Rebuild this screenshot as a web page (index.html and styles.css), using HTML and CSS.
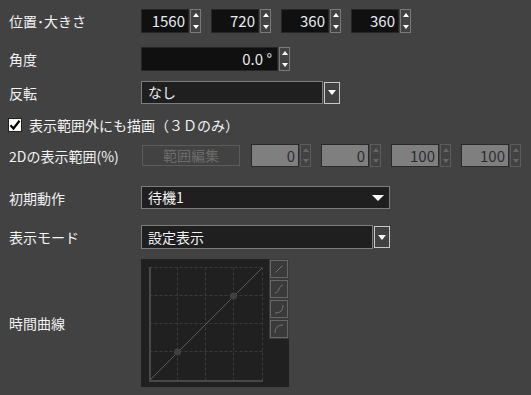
FILE: index.html
```html
<!doctype html>
<html>
<head>
<meta charset="utf-8" />
<title>プロパティ</title>
<link rel="stylesheet" href="styles.css">
</head>
<body>
<div class="props">
  <!-- 位置・大きさ -->
  <div class="row r-pos">
    <div class="label">位置･大きさ</div>
    <div class="num"><span class="box">1560</span><span class="spin"><i class="up"></i><i class="dn"></i></span></div>
    <div class="num"><span class="box">720</span><span class="spin"><i class="up"></i><i class="dn"></i></span></div>
    <div class="num"><span class="box">360</span><span class="spin"><i class="up"></i><i class="dn"></i></span></div>
    <div class="num"><span class="box">360</span><span class="spin"><i class="up"></i><i class="dn"></i></span></div>
  </div>

  <!-- 角度 -->
  <div class="row r-angle">
    <div class="label">角度</div>
    <div class="num wide"><span class="box">0.0 °</span><span class="spin"><i class="up"></i><i class="dn"></i></span></div>
  </div>

  <!-- 反転 -->
  <div class="row r-flip">
    <div class="label">反転</div>
    <div class="select s-flip">なし</div>
    <div class="drop"><i class="arrow"></i></div>
  </div>

  <!-- チェック -->
  <div class="row r-check">
    <span class="check">
      <svg width="12" height="12" viewBox="0 0 12 12"><path d="M1.5 6.2 L4.5 9.5 L10.5 1.8" fill="none" stroke="#000" stroke-width="2.2"/></svg>
    </span>
    <span class="check-text">表示範囲外にも描画（３Ｄのみ）</span>
  </div>

  <!-- 2Dの表示範囲 -->
  <div class="row r-range">
    <div class="label">2Dの表示範囲(%)</div>
    <div class="btn-off">範囲編集</div>
    <div class="num off"><span class="box">0</span><span class="spin"><i class="up"></i><i class="dn"></i></span></div>
    <div class="num off"><span class="box">0</span><span class="spin"><i class="up"></i><i class="dn"></i></span></div>
    <div class="num off"><span class="box">100</span><span class="spin"><i class="up"></i><i class="dn"></i></span></div>
    <div class="num off"><span class="box">100</span><span class="spin"><i class="up"></i><i class="dn"></i></span></div>
  </div>

  <!-- 初期動作 -->
  <div class="row r-motion">
    <div class="label">初期動作</div>
    <div class="select s-motion">待機1<i class="arrow big"></i></div>
  </div>

  <!-- 表示モード -->
  <div class="row r-mode">
    <div class="label">表示モード</div>
    <div class="select s-mode">設定表示</div>
    <div class="drop d-mode"><i class="arrow"></i></div>
  </div>

  <!-- 時間曲線 -->
  <div class="row r-curve">
    <div class="label">時間曲線</div>
    <div class="curve">
      <svg class="graph" width="128" height="128" viewBox="0 0 128 128">
        <g stroke="#3a3a3a" stroke-width="1" stroke-dasharray="3 2" fill="none">
          <path d="M8.5 8.5 H121.5"/>
          <path d="M8.5 36.5 H121.5"/>
          <path d="M8.5 64.5 H121.5"/>
          <path d="M8.5 92.5 H121.5"/>
          <path d="M36.5 8.5 V121.5"/>
          <path d="M64.5 8.5 V121.5"/>
          <path d="M92.5 8.5 V121.5"/>
          <path d="M121.5 8.5 V121.5"/>
        </g>
        <path d="M9 8 V122 H122" stroke="#484848" stroke-width="2" fill="none"/>
        <path d="M9 121 L121 9" stroke="#5a5a5a" stroke-width="1" fill="none"/>
        <circle cx="36.5" cy="93" r="3.5" fill="#404040"/>
        <circle cx="92.5" cy="37" r="3.5" fill="#404040"/>
      </svg>
      <div class="presets">
        <span class="preset"><svg width="16" height="16" viewBox="0 0 16 16"><path d="M4.5 11.5 L11.5 4.5" stroke="#767676" fill="none"/></svg></span>
        <span class="preset"><svg width="16" height="16" viewBox="0 0 16 16"><path d="M4 12 C8 12 8 4 12 4" stroke="#767676" fill="none"/></svg></span>
        <span class="preset"><svg width="16" height="16" viewBox="0 0 16 16"><path d="M4 12 C9.5 12 12 9.5 12 4" stroke="#767676" fill="none"/></svg></span>
        <span class="preset"><svg width="16" height="16" viewBox="0 0 16 16"><path d="M4 12 C4 7 6.5 4 12 4" stroke="#767676" fill="none"/></svg></span>
      </div>
    </div>
  </div>
</div>
</body>
</html>
```

FILE: styles.css
```css
body { margin: 0; background: #424242; color: #f2f2f2; font-family: "Noto Sans CJK JP", "Noto Sans", sans-serif; font-size: 14px; }
.props { display: flex; flex-direction: column; }
.row { display: flex; align-items: center; padding-left: 9px; }
.label { width: 132px; flex: none; line-height: 20px; }

/* Zeilenabstaende */
.r-pos { margin-top: 9px; height: 24px; }
.r-angle { margin-top: 14px; height: 24px; }
.r-flip { margin-top: 10px; height: 23px; }
.r-check { margin-top: 14px; height: 14px; padding-left: 8px; }
.r-range { margin-top: 12px; height: 23px; }
.r-motion { margin-top: 19px; height: 23px; }
.r-mode { margin-top: 16px; height: 24px; }
.r-curve { margin-top: 10px; height: 128px; }

/* Zahlenfelder */
.num { display: flex; gap: 1px; height: 100%; margin-right: 10px; }
.box { width: 48px; box-sizing: border-box; background: #101010; border: 1px solid #262626; text-align: right; padding-right: 3px; line-height: 22px; font-size: 15px; color: #e6ecf2; }
.wide .box { width: 137px; padding-right: 5px; }
.spin { width: 11px; box-sizing: border-box; border: 1px solid #7a7a7a; display: flex; flex-direction: column; justify-content: space-between; align-items: center; padding: 3px 0 3px; }
.up { width: 0; height: 0; border: solid transparent; border-width: 0 3.5px 4px; border-bottom-color: #fff; }
.dn { width: 0; height: 0; border: solid transparent; border-width: 4px 3.5px 0; border-top-color: #fff; }

.off .box { background: #7f7f7f; border-color: #2a2a2a; color: #2a2e34; width: 48px; }
.off .spin { border-color: #5c5c5c; }
.off .up { border-bottom-color: #666; }
.off .dn { border-top-color: #666; }

/* Auswahlfelder */
.select { height: 100%; box-sizing: border-box; background: #1f1f1f; border: 1px solid #7d7d7d; padding-left: 6px; line-height: 21px; color: #f2f2f2; display: flex; align-items: center; }
.s-flip { width: 182px; }
.s-motion { width: 249px; justify-content: space-between; padding-right: 5px; }
.s-mode { width: 232px; }
.drop { width: 16px; height: 22px; box-sizing: border-box; margin-left: 1px; border: 1px solid #c8c8c8; display: flex; align-items: center; justify-content: center; }
.d-mode { height: 22px; }
.arrow { width: 0; height: 0; border: solid transparent; border-width: 5px 4px 0; border-top-color: #fff; }
.arrow.big { border-width: 6px 6px 0; }

/* Checkbox */
.check { width: 14px; height: 14px; box-sizing: border-box; background: #fff; border: 1px solid #222; display: flex; align-items: center; justify-content: center; }
.check-text { margin-left: 7px; line-height: 20px; }

/* deaktivierter Knopf */
.btn-off { width: 98px; height: 21px; box-sizing: border-box; border: 1px solid #5c5c5c; color: #6c6c6c; text-align: center; line-height: 19px; margin-left: 1px; margin-right: 11px; }

/* Zeitkurve */
.curve { display: flex; align-items: flex-start; width: 148px; height: 128px; background: #202020; }
.graph { display: block; }
.presets { width: 20px; height: 80px; background: #3a3a3a; display: flex; flex-direction: column; gap: 2px; padding: 1px 1px; box-sizing: border-box; }
.preset { width: 18px; height: 18px; box-sizing: border-box; border: 1px solid #666; display: flex; align-items: center; justify-content: center; }
```
